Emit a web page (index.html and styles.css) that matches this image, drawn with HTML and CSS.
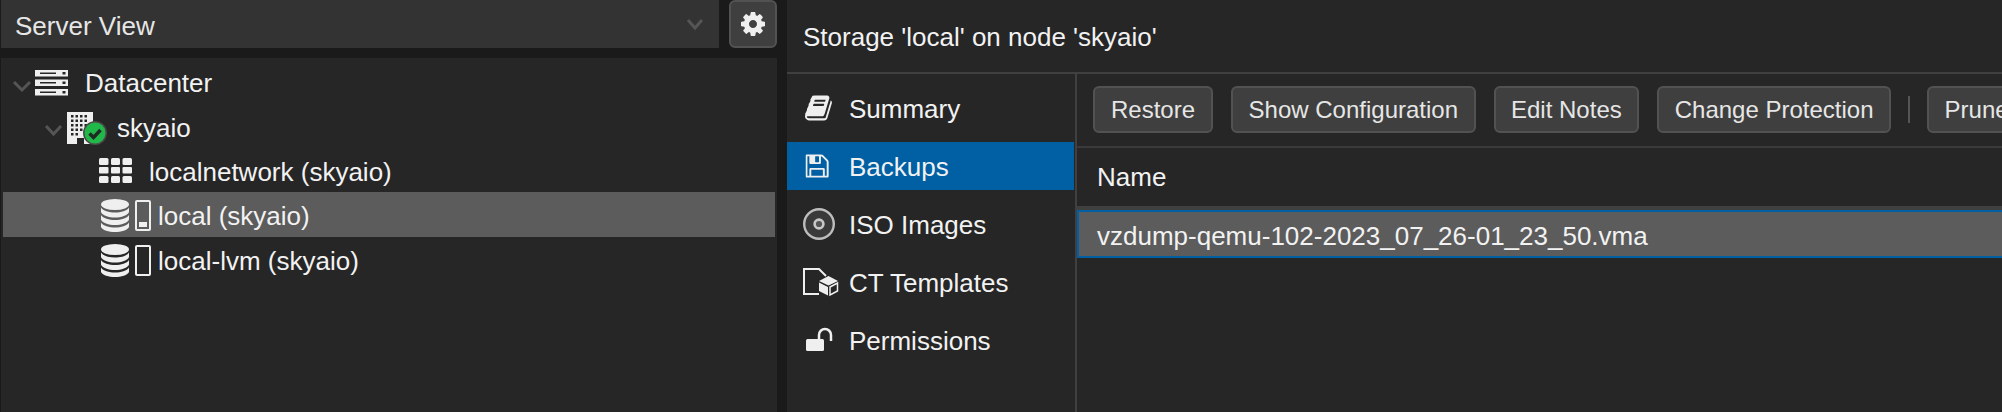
FILE: index.html
```html
<!DOCTYPE html>
<html lang="en">
<head>
<meta charset="utf-8">
<title>Storage local</title>
<link rel="stylesheet" href="styles.css">
</head>
<body>
<div class="app">
  <aside class="nav">
    <div class="nav-top">
      <div class="view-select">
        <span class="select-text">Server View</span>
        <svg class="select-chevron" width="18" height="12" viewBox="0 0 18 12"><path d="M2 2l7 8 7-8" class="chev"/></svg>
      </div>
      <button class="gear-btn" type="button" aria-label="Settings">
        <svg width="28" height="28" viewBox="0 0 1792 1792"><path class="ico" d="M1152 896q0-106-75-181t-181-75-181 75-75 181 75 181 181 75 181-75 75-181zm512-109v222q0 12-8 23t-20 13l-185 28q-19 54-39 91 35 50 107 138 10 12 10 25t-9 23q-27 37-99 108t-94 71q-12 0-26-9l-138-108q-44 23-91 38-16 136-29 186-7 28-36 28h-222q-14 0-24.500-8.500t-11.500-21.500l-28-184q-49-16-90-37l-141 107q-10 9-25 9-14 0-25-11-126-114-165-168-7-10-7-23 0-12 8-23 15-21 51-66.500t54-70.500q-27-50-41-99l-183-27q-13-2-21-12.500t-8-23.500v-222q0-12 8-23t19-13l186-28q14-46 39-92-40-57-107-138-10-12-10-24 0-10 9-23 26-36 98.500-107.500t94.500-71.500q13 0 26 10l138 107q44-23 91-38 16-136 29-186 7-28 36-28h222q14 0 24.500 8.500t11.500 21.500l28 184q49 16 90 37l142-107q9-9 24-9 13 0 25 10 129 119 165 170 7 8 7 22 0 12-8 23-15 21-51 66.500t-54 70.500q26 50 41 98l183 28q13 2 21 12.500t8 23.500z"/></svg>
      </button>
    </div>
    <div class="tree">
      <div class="tree-row lvl0">
        <svg class="chev-slot" width="22" height="44" viewBox="0 0 22 44"><path d="M3 23l8 8 8-8" class="chev"/></svg>
        <svg class="tree-icon" width="52" height="44" viewBox="0 0 52 44">
          <path class="ico" fill-rule="evenodd" d="M2 11h33v6.500H2zM7 13.500v1.500h16v-1.500zM29.500 13v2.500h3V13zM2 20.500h33V27H2zM7 23v1.500h16V23zM29.500 22.500V25h3v-2.500zM2 30h33v6.500H2zM7 32.500V34h16v-1.500zM29.500 32v2.500h3V32z"/>
        </svg>
        <span class="tree-label">Datacenter</span>
      </div>
      <div class="tree-row lvl1">
        <svg class="chev-slot" width="22" height="44" viewBox="0 0 22 44"><path d="M3 22l7.500 8 7.500-8" class="chev"/></svg>
        <svg class="tree-icon" width="52" height="44" viewBox="0 0 52 44">
          <path class="ico" d="M2 8h26v32H2z"/>
          <path class="win" d="M6 11h2.500v2.500H6zM10.500 11H13v2.500h-2.500zM15 11h2.500v2.500H15zM19.500 11H22v2.500h-2.500zM6 15.500h2.500V18H6zM10.500 15.500H13V18h-2.500zM15 15.500h2.500V18H15zM19.500 15.500H22V18h-2.500zM6 20h2.500v2.500H6zM10.500 20H13v2.500h-2.500zM15 20h2.500v2.500H15zM19.500 20H22v2.500h-2.500zM6 24.500h2.500V27H6zM10.500 24.500H13V27h-2.500zM15 24.500h2.500V27H15zM6 29h2.500v2.500H6zM10.500 29H13v2.500h-2.500zM12 34h7v6h-7z"/>
          <circle cx="30" cy="29" r="12" class="ok-ring"/>
          <circle cx="30" cy="29" r="10.500" class="ok-fill"/>
          <path d="M24.500 29.500l4 4 7-7.500" class="ok-check"/>
        </svg>
        <span class="tree-label">skyaio</span>
      </div>
      <div class="tree-row lvl2">
        <span class="chev-space"></span>
        <svg class="tree-icon" width="52" height="44" viewBox="0 0 52 44">
          <g class="ico">
            <rect x="2" y="10" width="9.500" height="7" rx="1.500"/>
            <rect x="14" y="10" width="9" height="7" rx="1.500"/>
            <rect x="25.500" y="10" width="9.500" height="7" rx="1.500"/>
            <rect x="2" y="19" width="9.500" height="6.500" rx="1"/>
            <rect x="14" y="19" width="9" height="6.500" rx="1"/>
            <rect x="25.500" y="19" width="9.500" height="6.500" rx="1"/>
            <rect x="2" y="28" width="9.500" height="7" rx="1.500"/>
            <rect x="14" y="28" width="9" height="7" rx="1.500"/>
            <rect x="25.500" y="28" width="9.500" height="7" rx="1.500"/>
          </g>
        </svg>
        <span class="tree-label">localnetwork (skyaio)</span>
      </div>
      <div class="tree-row lvl2 selected">
        <span class="chev-space"></span>
        <svg class="tree-icon store" width="61" height="44" viewBox="0 0 61 44">
          <ellipse class="ico" cx="18" cy="12.500" rx="14" ry="5.500"/>
          <path class="ico" d="M4 15.500c2 3.500 8 5 14 5s12-1.500 14-5v4.500c-1 3.500-8 5.500-14 5.500s-13-2-14-5.500zM4 23c2 3.500 8 5 14 5s12-1.500 14-5v4.500c-1 3.500-8 5.500-14 5.500s-13-2-14-5.500zM4 30.500c2 3.500 8 5 14 5s12-1.500 14-5v4.500c-1 3-8 5-14 5s-13-2-14-5z"/>
          <rect class="bar" x="39" y="9" width="14" height="29" rx="1"/>
          <rect class="ico" x="42" y="30" width="8" height="5"/>
        </svg>
        <span class="tree-label">local (skyaio)</span>
      </div>
      <div class="tree-row lvl2">
        <span class="chev-space"></span>
        <svg class="tree-icon store" width="61" height="44" viewBox="0 0 61 44">
          <ellipse class="ico" cx="18" cy="12.500" rx="14" ry="5.500"/>
          <path class="ico" d="M4 15.500c2 3.500 8 5 14 5s12-1.500 14-5v4.500c-1 3.500-8 5.500-14 5.500s-13-2-14-5.500zM4 23c2 3.500 8 5 14 5s12-1.500 14-5v4.500c-1 3.500-8 5.500-14 5.500s-13-2-14-5.500zM4 30.500c2 3.500 8 5 14 5s12-1.500 14-5v4.500c-1 3-8 5-14 5s-13-2-14-5z"/>
          <rect class="bar" x="39" y="9" width="14" height="29" rx="1"/>
        </svg>
        <span class="tree-label">local-lvm (skyaio)</span>
      </div>
    </div>
  </aside>
  <main class="main">
    <header class="title">Storage 'local' on node 'skyaio'</header>
    <div class="body">
      <nav class="side">
        <a class="side-item">
          <svg class="side-icon" width="36" height="36" viewBox="0 0 36 36"><svg x="2" y="3.500" width="29" height="29" viewBox="0 0 1792 1792"><path class="ico" d="M1639 478q40 57 18 129l-275 906q-19 64-76.500 107.500t-122.500 43.500h-923q-77 0-148.500-53.500t-99.500-131.500q-24-67-2-127 0-4 3-27t4-37q1-8-3-21.500t-3-19.500q2-11 8-21t16.500-23.500 16.500-23.500q23-38 45-91.500t30-91.500q3-10 .5-30t-.5-28q3-11 17-28t17-23q21-36 42-92t25-90q1-9-2.500-32t.5-28q4-13 22-30.500t22-22.500q19-26 42.500-84.500t27.500-96.500q1-8-3-25.500t-2-26.500q2-8 9-18t18-23 17-21q8-12 16.500-30.500t15-35 16-36 19.500-32 26.500-23.500 36-11.500 47.500 5.500l-1 3q38-9 51-9h761q74 0 114 56t18 130l-274 906q-36 119-71.500 153.500t-128.500 34.500h-869q-27 0-38 15-11 16-1 43 24 70 144 70h923q29 0 56-15.500t35-41.500l300-987q7-22 5-57 38 15 59 43zm-1064 2q-4 13 2 22.500t20 9.500h608q13 0 25.500-9.500t16.500-22.500l21-64q4-13-2-22.500t-20-9.500h-608q-13 0-25.500 9.500t-16.500 22.500zm-83 256q-4 13 2 22.500t20 9.500h608q13 0 25.500-9.500t16.500-22.500l21-64q4-13-2-22.500t-20-9.500h-608q-13 0-25.500 9.500t-16.500 22.500z"/></svg></svg>
          <span class="side-text">Summary</span>
        </a>
        <a class="side-item active">
          <svg class="side-icon" width="36" height="36" viewBox="0 0 36 36"><svg x="2.500" y="4.500" width="27" height="27" viewBox="0 0 1792 1792"><path class="ico" d="M384 1536h768v-384h-768v384zm896 0h128v-896q0-14-10-38.500t-20-34.500l-281-281q-10-10-34-20t-39-10v416q0 40-28 68t-68 28h-576q-40 0-68-28t-28-68v-416h-128v1280h128v-416q0-40 28-68t68-28h832q40 0 68 28t28 68v416zm-384-928v-320q0-13-9.500-22.500t-22.500-9.500h-192q-13 0-22.500 9.500t-9.500 22.500v320q0 13 9.500 22.500t22.500 9.500h192q13 0 22.500-9.500t9.500-22.500zm640 32v928q0 40-28 68t-68 28h-1344q-40 0-68-28t-28-68v-1344q0-40 28-68t68-28h928q40 0 88 20t76 48l280 280q28 28 48 76t20 88z"/></svg></svg>
          <span class="side-text">Backups</span>
        </a>
        <a class="side-item">
          <svg class="side-icon" width="36" height="36" viewBox="0 0 36 36">
            <circle cx="16" cy="18" r="14.800" class="disc-outer"/>
            <circle cx="16" cy="18" r="4.400" class="disc-inner"/>
          </svg>
          <span class="side-text">ISO Images</span>
        </a>
        <a class="side-item">
          <svg class="side-icon" width="36" height="36" viewBox="0 0 36 36">
            <path class="line" d="M16 30H1V5h15l7 7"/>
            <path class="ico" d="M16 17l9.500-5 9.500 5-9.500 4.500zM16 18.500l9 4.500v8.500l-9-4.500z"/>
            <path class="cube-edge" d="M27 23l7.500-4v8l-7.500 4z"/>
          </svg>
          <span class="side-text">CT Templates</span>
        </a>
        <a class="side-item">
          <svg class="side-icon" width="36" height="36" viewBox="0 0 36 36">
            <rect class="ico" x="3" y="17" width="18" height="12" rx="1.500"/>
            <path class="shackle" d="M16 18v-5a6 6 0 0 1 12 0v6"/>
          </svg>
          <span class="side-text">Permissions</span>
        </a>
      </nav>
      <section class="content">
        <div class="toolbar">
          <button class="btn" type="button">Restore</button>
          <button class="btn" type="button">Show Configuration</button>
          <button class="btn" type="button">Edit Notes</button>
          <button class="btn" type="button">Change Protection</button>
          <span class="sep"></span>
          <button class="btn" type="button">Prune group</button>
        </div>
        <div class="grid-head">Name</div>
        <div class="grid-row">vzdump-qemu-102-2023_07_26-01_23_50.vma</div>
      </section>
    </div>
  </main>
</div>
</body>
</html>
```

FILE: styles.css
```css
* { box-sizing: border-box; }
html, body { margin: 0; padding: 0; }
body {
  width: 2002px;
  height: 412px;
  overflow: hidden;
  background: #1a1a1a;
  color: #f2f2f2;
  font-family: "Liberation Sans", Arial, sans-serif;
  font-size: 26px;
}
.app { display: flex; height: 412px; }

.nav {
  flex: 0 0 787px;
  display: flex;
  flex-direction: column;
  gap: 10px;
  padding: 0 10px 0 1px;
}
.nav-top { display: flex; gap: 10px; height: 48px; flex: none; }
.view-select {
  flex: 1;
  display: flex;
  align-items: center;
  justify-content: space-between;
  padding: 0 15px 0 14px;
  background: #333333;
  color: #e6e6e6;
}
.select-text { margin-top: 4px; }
.gear-btn {
  flex: 0 0 48px;
  display: flex;
  align-items: center;
  justify-content: center;
  padding: 0;
  background: #3f3f3f;
  border: 2px solid #525252;
  border-radius: 6px;
}
.chev { fill: none; stroke: #555555; stroke-width: 3; }
.ico { fill: #efefef; }
.tree {
  flex: 1;
  background: #262626;
  padding: 1px 2px;
}
.tree-row {
  display: flex;
  align-items: center;
  height: 44.4px;
}
.tree-row.selected { background: #5c5c5c; }
.lvl0 { padding-left: 8px; }
.lvl1 { padding-left: 40px; }
.lvl2 { padding-left: 72px; }
.chev-slot, .chev-space { flex: 0 0 22px; }
.tree-icon { flex: none; overflow: visible; }
.tree-label { margin-top: 5px; white-space: nowrap; }
.win { fill: #262626; }
.ok-ring { fill: #4a4a4a; }
.ok-fill { fill: #21b84a; }
.ok-check { fill: none; stroke: #1f2a22; stroke-width: 3.500; }
.bar { fill: none; stroke: #efefef; stroke-width: 2; }

.main {
  flex: 1;
  min-width: 0;
  display: flex;
  flex-direction: column;
  background: #262626;
}
.title {
  flex: 0 0 74px;
  padding: 2px 16px 0;
  display: flex;
  align-items: center;
  border-bottom: 2px solid #404040;
}
.body { flex: 1; display: flex; min-height: 0; }
.side {
  flex: 0 0 288px;
  display: flex;
  flex-direction: column;
  gap: 10px;
  padding: 10px 1px 0 0;
}
.side-item {
  display: flex;
  align-items: center;
  gap: 10px;
  height: 48px;
  padding-left: 16px;
  color: #f2f2f2;
}
.side-text { margin-top: 2px; }
.side-item.active { background: #0060a3; }
.side-icon { flex: none; overflow: visible; }
.disc-outer { fill: #3a3a3a; stroke: #bdbdbd; stroke-width: 2.400; }
.disc-inner { fill: #555555; stroke: #c8c8c8; stroke-width: 2.600; }
.line { fill: none; stroke: #efefef; stroke-width: 2; }
.cube-edge { fill: none; stroke: #efefef; stroke-width: 1.500; }
.shackle { fill: none; stroke: #efefef; stroke-width: 2.500; }

.content {
  flex: 1;
  min-width: 0;
  border-left: 2px solid #404040;
  overflow: hidden;
}
.toolbar {
  display: flex;
  align-items: center;
  gap: 18px;
  height: 74px;
  padding: 12px 0 13px 16px;
  border-bottom: 2px solid #3a3a3a;
  overflow: hidden;
}
.btn {
  flex: none;
  height: 47px;
  padding: 0 15.500px;
  background: #3f3f3f;
  border: 2px solid #525252;
  border-radius: 6px;
  color: #e6e6e6;
  font: inherit;
  font-size: 24px;
  white-space: nowrap;
}
.btn:first-child { padding: 0 16px; }
.sep { flex: none; width: 2px; height: 27px; margin: 0 -1px 0 -1px; background: #555555; }
.grid-head {
  display: flex;
  align-items: center;
  height: 62px;
  padding: 0 0 0 20px;
  border-bottom: 4px solid #404040;
}
.grid-row {
  display: flex;
  align-items: center;
  height: 48px;
  padding: 4px 0 0 18px;
  background: #5c5c5c;
  border: 2px solid #0060a3;
  border-right: 0;
}
```
